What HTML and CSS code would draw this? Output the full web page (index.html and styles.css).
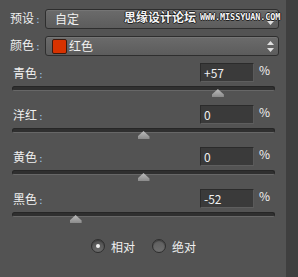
FILE: index.html
```html
<!DOCTYPE html>
<html>
<head>
<meta charset="utf-8">
<link rel="stylesheet" href="styles.css">
</head>
<body>
<div class="panel">
  <div class="main">
    <div class="row preset-row">
      <span class="label">预设<i class="colon">:</i></span>
      <div class="select"><span class="sel-text">自定</span><span class="arrows"><svg width="7" height="11" viewBox="0 0 7 11"><path d="M3.5 0 L7 4 L0 4Z M0 7 L7 7 L3.5 11Z" fill="#e0e0e0"/></svg></span></div>
    </div>
    <div class="row color-row">
      <span class="label">颜色<i class="colon">:</i></span>
      <div class="select"><span class="swatch"></span><span class="sel-text tight">红色</span><span class="arrows"><svg width="7" height="11" viewBox="0 0 7 11"><path d="M3.5 0 L7 4 L0 4Z M0 7 L7 7 L3.5 11Z" fill="#e0e0e0"/></svg></span></div>
    </div>
    <div class="sliders">
      <div class="group">
        <div class="top"><span class="slabel">青色<i class="colon">:</i></span><span class="input">+57</span><span class="pct">%</span></div>
        <div class="track"><span class="thumb" style="left:78.5%"></span></div>
      </div>
      <div class="group">
        <div class="top"><span class="slabel">洋红<i class="colon">:</i></span><span class="input">0</span><span class="pct">%</span></div>
        <div class="track"><span class="thumb" style="left:50%"></span></div>
      </div>
      <div class="group">
        <div class="top"><span class="slabel">黄色<i class="colon">:</i></span><span class="input">0</span><span class="pct">%</span></div>
        <div class="track"><span class="thumb" style="left:50%"></span></div>
      </div>
      <div class="group">
        <div class="top"><span class="slabel">黑色<i class="colon">:</i></span><span class="input">-52</span><span class="pct">%</span></div>
        <div class="track"><span class="thumb" style="left:24%"></span></div>
      </div>
    </div>
    <div class="radios">
      <span class="radio on"><span class="dot"></span></span><span class="rtext">相对</span>
      <span class="radio"></span><span class="rtext">绝对</span>
    </div>
  </div>
  <div class="strip"></div>
  <div class="watermark"><span class="wm-cn">思缘设计论坛</span><span class="wm-en">WWW.MISSYUAN.COM</span></div>
</div>
</body>
</html>
```
FILE: styles.css
```css
html, body {
  margin: 0;
  padding: 0;
  background: #535353;
}
body {
  font-family: "Noto Sans CJK SC", "DejaVu Sans", sans-serif;
  font-size: 12px;
  color: #f0f0f0;
}
.panel {
  position: relative;
  display: flex;
  width: 298px;
  height: 277px;
  overflow: hidden;
}
.main {
  width: 286px;
  flex: none;
  box-sizing: border-box;
  padding-top: 9px;
}
.strip {
  flex: 1;
  background: #3f3f3f;
}
.row {
  display: flex;
  align-items: center;
  height: 20px;
}
.color-row {
  margin-top: 7px;
}
.label {
  width: 35px;
  padding-left: 10px;
  line-height: 20px;
  flex: none;
}
.colon {
  font-style: normal;
  color: #9fc6e8;
  font-family: "DejaVu Sans", sans-serif;
  font-size: 11px;
  margin-left: 2px;
}
.select {
  position: relative;
  width: 234px;
  height: 20px;
  box-sizing: border-box;
  border: 1px solid #2e2e2e;
  border-radius: 3px;
  background: linear-gradient(#6b6b6b, #5c5c5c);
  box-shadow: inset 0 1px 0 #757575;
  display: flex;
  align-items: center;
}
.sel-text {
  padding-left: 9px;
  line-height: 18px;
}
.sel-text.tight {
  padding-left: 2px;
}
.swatch {
  width: 15px;
  height: 15px;
  margin-left: 6px;
  box-sizing: border-box;
  background: #d83200;
  border: 1px solid #3a1a10;
  border-radius: 2px;
}
.arrows {
  position: absolute;
  right: 4px;
  top: 4px;
  height: 11px;
  display: flex;
}
.sliders {
  margin-top: 7px;
}
.group {
  height: 42px;
}
.top {
  display: flex;
  align-items: center;
  height: 19px;
}
.slabel {
  width: 187px;
  padding-left: 13px;
  flex: none;
}
.input {
  width: 54px;
  height: 19px;
  box-sizing: border-box;
  flex: none;
  background: #3a3a3a;
  border: 1px solid #2b2b2b;
  border-bottom-color: #5e5e5e;
  border-right-color: #5a5a5a;
  padding-left: 3px;
  line-height: 17px;
  font-family: "Noto Sans CJK SC", "DejaVu Sans", sans-serif;
}
.pct {
  margin-left: 5px;
  line-height: 19px;
  font-size: 12px;
  margin-top: -6px;
}
.track {
  position: relative;
  margin: 4px 0 0 12px;
  width: 263px;
  height: 5px;
  box-sizing: border-box;
  background: #2f2f2f;
  border: 1px solid #262626;
  border-bottom-color: #676767;
  border-radius: 3px;
}
.thumb {
  position: absolute;
  top: 2px;
  width: 12px;
  height: 8px;
  margin-left: -6px;
  background: linear-gradient(#bdbdbd, #8a8a8a);
  clip-path: polygon(50% 0, 100% 70%, 100% 100%, 0 100%, 0 70%);
}
.radios {
  display: flex;
  align-items: center;
  margin-top: 7px;
  padding-left: 91px;
  height: 16px;
}
.radio {
  width: 14px;
  height: 14px;
  box-sizing: border-box;
  border-radius: 50%;
  border: 1px solid #2e2e2e;
  background: linear-gradient(#5e5e5e, #6e6e6e);
  box-shadow: inset 0 1px 1px #3a3a3a;
  display: flex;
  align-items: center;
  justify-content: center;
}
.radio.on {
  background: linear-gradient(#505050, #6a6a6a);
}
.dot {
  width: 4px;
  height: 4px;
  border-radius: 50%;
  background: #f2f2f2;
}
.rtext {
  margin-left: 6px;
  margin-right: 17px;
}
.watermark {
  position: absolute;
  left: 124px;
  top: 8px;
  display: flex;
  align-items: center;
  color: #f4f4f4;
  text-shadow: 1px 0 0 #222, -1px 0 0 #222, 0 1px 0 #222, 0 -1px 0 #222;
}
.wm-cn {
  font-size: 12px;
  font-weight: bold;
}
.wm-en {
  margin-left: 4px;
  font-family: "DejaVu Sans Mono", monospace;
  font-size: 8.5px;
  font-weight: bold;
  letter-spacing: -0.1px;
}
```
